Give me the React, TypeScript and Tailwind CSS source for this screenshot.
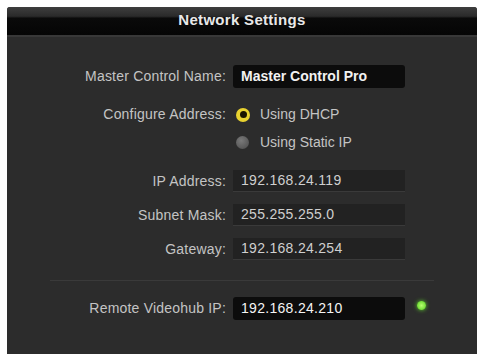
import React from 'react'

const font = { fontFamily: '"Liberation Sans", Arial, sans-serif' }

function Row({ label, children }: { label: string; children: React.ReactNode }) {
  return (
    <div className="flex items-center">
      <div className="w-[220px] pr-[1px] text-right text-[14px] tracking-[0.2px] text-[#c4c4c4]">{label}</div>
      <div className="ml-[6px] flex items-center">{children}</div>
    </div>
  )
}

function Field({ value, dark, bold }: { value: string; dark?: boolean; bold?: boolean }) {
  return dark ? (
    <div
      className={
        bold
          ? 'flex h-[23px] w-[172px] items-center rounded-[3px] bg-[#0c0c0c] pl-[8px] text-[14px] font-bold text-[#f2f2f2]'
          : 'flex h-[23px] w-[172px] items-center rounded-[3px] bg-[#0c0c0c] pl-[8px] text-[14px] tracking-[0.3px] text-[#f4f4f4]'
      }
    >
      {value}
    </div>
  ) : (
    <div className="flex h-[22px] w-[172px] items-center border-b border-[#3a3a3a] bg-[#222222] pl-[8px] text-[14px] tracking-[0.3px] text-[#cfcfcf]">
      {value}
    </div>
  )
}

export default function App() {
  return (
    <div className="h-[354px] w-[481px] bg-white pl-[7px] pt-[7px]" style={font}>
      <div className="flex h-[347px] w-[470px] flex-col rounded-t-[3px] bg-[#2c2c2c]">
        <div className="flex h-[30px] items-center justify-center rounded-t-[3px] border-b-2 border-[#383838] bg-[linear-gradient(to_bottom,#3e3e3e_0%,#2a2a2a_33%,#0a0a0a_40%,#050505_100%)] pb-[2px] text-[15px] font-bold tracking-[0.3px] text-[#e8e8e8]">
          Network Settings
        </div>

        <div className="mt-[28px]">
          <Row label="Master Control Name:">
            <Field value="Master Control Pro" dark bold />
          </Row>
        </div>

        <div className="mt-[16px] h-[20px]">
          <Row label="Configure Address:">
            <div className="flex h-[20px] items-center">
              <span className="ml-[3px] flex h-[14px] w-[14px] items-center justify-center rounded-full bg-[#e8d230]">
                <span className="h-[7px] w-[7px] rounded-full bg-[#1a1400]" />
              </span>
              <span className="ml-[10px] text-[14px] text-[#c4c4c4]">Using DHCP</span>
            </div>
          </Row>
        </div>

        <div className="mt-[8px] flex h-[20px] items-center pl-[229px]">
          <span className="h-[13px] w-[13px] rounded-full bg-[radial-gradient(circle_at_40%_35%,#7a7a7a,#4a4a4a)]" />
          <span className="ml-[11px] text-[14px] text-[#c4c4c4]">Using Static IP</span>
        </div>

        <div className="mt-[18px]">
          <Row label="IP Address:">
            <Field value="192.168.24.119" />
          </Row>
        </div>
        <div className="mt-[12px]">
          <Row label="Subnet Mask:">
            <Field value="255.255.255.0" />
          </Row>
        </div>
        <div className="mt-[12px]">
          <Row label="Gateway:">
            <Field value="192.168.24.254" />
          </Row>
        </div>

        <div className="mx-[43px] mt-[20px] h-px bg-[#3a3a3a]" />

        <div className="mt-[16px]">
          <Row label="Remote Videohub IP:">
            <Field value="192.168.24.210" dark />
            <span className="ml-[12px] mb-[6px] h-[9px] w-[9px] rounded-full bg-[radial-gradient(circle,#b8ff70,#4ecb1a)] shadow-[0_0_4px_#5fd82a]" />
          </Row>
        </div>
      </div>
    </div>
  )
}
